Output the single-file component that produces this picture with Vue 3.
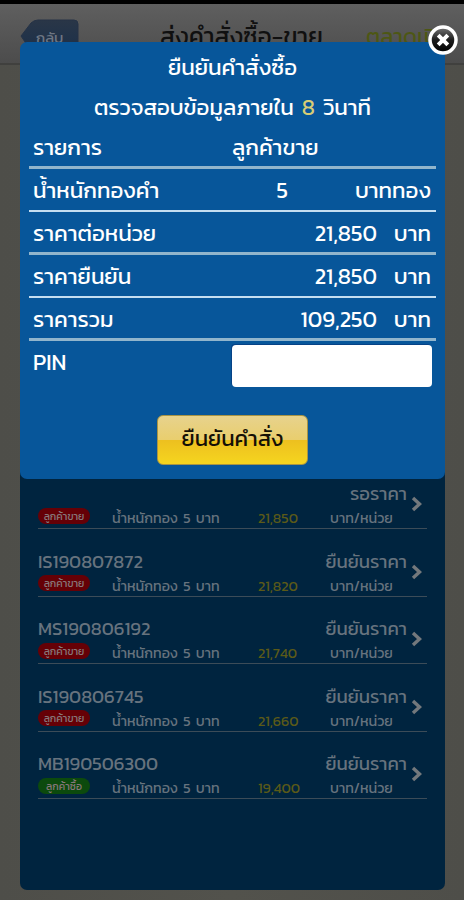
<template>
  <div class="screen">
    <header class="topbar">
      <div class="back-wrapper">
        <svg class="back-shape" width="60" height="44" viewBox="0 0 60 44">
          <defs>
            <linearGradient id="backFill" x1="0" y1="0" x2="0" y2="1">
              <stop offset="0" stop-color="#2a3647" />
              <stop offset="0.4" stop-color="#223349" />
              <stop offset="1" stop-color="#1c2c44" />
            </linearGradient>
          </defs>
          <path d="M1 17 L11 4 Q14 1 18 1 H54 Q58 1 58 5 V38 Q58 42 54 42 H18 Q14 42 11 32 Z" fill="url(#backFill)" stroke="#263347" />
        </svg>
        <span class="back-label">กลับ</span>
      </div>
      <h1 class="page-title">ส่งคำสั่งซื้อ-ขาย</h1>
      <span class="market">ตลาดเปิด</span>
    </header>

    <main class="orders">
      <div v-for="(order, index) in orders" :key="index" class="order">
        <div class="order-head">
          <span class="order-id">{{ order.id }}</span>
          <span class="order-status">{{ order.status }}</span>
        </div>
        <div class="order-info">
          <span class="badge" :class="{ buy: order.buy }">{{ order.buy ? 'ลูกค้าซื้อ' : 'ลูกค้าขาย' }}</span>
          <span class="weight">น้ำหนักทอง 5 บาท</span>
          <span class="price">{{ order.price }}</span>
          <span class="unit">บาท/หน่วย</span>
        </div>
        <svg class="chevron" width="12" height="18" viewBox="0 0 12 18">
          <path d="M2 3 L8.5 9 L2 15" fill="none" stroke="#73787c" stroke-width="3.4" />
        </svg>
      </div>
    </main>

    <section class="modal">
      <h2 class="modal-title">ยืนยันคำสั่งซื้อ</h2>
      <p class="countdown">ตรวจสอบข้อมูลภายใน <span class="seconds">{{ seconds }}</span> วินาที</p>

      <div class="table">
        <div v-for="(row, index) in rows" :key="row.label" class="row" :class="{ thick: index % 2 === 0 }">
          <span class="label">{{ row.label }}</span>
          <span class="value" :class="row.kind">{{ row.value }}</span>
          <span v-if="row.unit" class="row-unit">{{ row.unit }}</span>
        </div>
      </div>

      <div class="pin">
        <label for="pin" class="pin-label">PIN</label>
        <input id="pin" v-model="pin" class="pin-input" type="password">
      </div>

      <button class="confirm"><span class="confirm-text">ยืนยันคำสั่ง</span></button>

      <svg class="close" width="32" height="32" viewBox="0 0 32 32">
        <defs>
          <linearGradient id="closeFill" x1="0" y1="0" x2="0" y2="1">
            <stop offset="0" stop-color="#777" />
            <stop offset="0.5" stop-color="#1c1c1c" />
            <stop offset="1" stop-color="#000" />
          </linearGradient>
        </defs>
        <circle cx="16" cy="16" r="13" fill="url(#closeFill)" stroke="#fff" stroke-width="3.5" />
        <path d="M11.2 11.2 L20.8 20.8 M20.8 11.2 L11.2 20.8" stroke="#fff" stroke-width="4" />
      </svg>
    </section>
  </div>
</template>

<script setup>
import { ref } from 'vue';

const seconds = ref(8);
const pin = ref('');

const rows = [
  { label: 'รายการ', value: 'ลูกค้าขาย', kind: 'side' },
  { label: 'น้ำหนักทองคำ', value: '5', kind: 'amount', unit: 'บาททอง' },
  { label: 'ราคาต่อหน่วย', value: '21,850', kind: 'money', unit: 'บาท' },
  { label: 'ราคายืนยัน', value: '21,850', kind: 'money', unit: 'บาท' },
  { label: 'ราคารวม', value: '109,250', kind: 'money', unit: 'บาท' },
];

const orders = [
  { id: '', status: 'รอราคา', price: '21,850' },
  { id: 'IS190807872', status: 'ยืนยันราคา', price: '21,820' },
  { id: 'MS190806192', status: 'ยืนยันราคา', price: '21,740' },
  { id: 'IS190806745', status: 'ยืนยันราคา', price: '21,660' },
  { id: 'MB190506300', status: 'ยืนยันราคา', price: '19,400', buy: true },
];
</script>

<style>
body {
  margin: 0;
  background: #50504a;
}
</style>

<style scoped>
.screen {
  position: relative;
  box-sizing: border-box;
  width: 464px;
  height: 900px;
  overflow: hidden;
  display: flex;
  flex-direction: column;
  border-top: 4px solid #000;
  background: linear-gradient(90deg, #4e4e49, #52524c 50%, #4e4e49);
  font-family: 'Kanit', 'Prompt', 'Noto Sans Thai', 'Inter', sans-serif;
  white-space: nowrap;
}

.topbar {
  flex: none;
  height: 61px;
  box-sizing: border-box;
  display: flex;
  padding: 15px 0 0 20px;
  background: linear-gradient(#5f5f5f, #4c4c4c);
  border-bottom: 2px solid #40403e;
}

.back-wrapper {
  display: grid;
  width: 60px;
  height: 44px;
}

.back-shape,
.back-label {
  grid-area: 1 / 1;
}

.back-label {
  padding: 9px 0 0 16px;
  font-size: 15px;
  line-height: 20px;
  color: #6d7683;
}

.page-title {
  margin: 3px 0 0 80px;
  width: 206px;
  font-size: 24.5px;
  font-weight: 400;
  line-height: 30px;
  color: #101010;
}

.market {
  margin-top: 3px;
  font-size: 22px;
  line-height: 30px;
  color: #4d5714;
}

.orders {
  box-sizing: border-box;
  width: 425px;
  height: 809px;
  margin: 16px 0 0 20px;
  padding: 398px 18px 0;
  border-radius: 7px;
  background: #00243f;
}

.order {
  box-sizing: border-box;
  width: 389px;
  height: 67.5px;
  display: grid;
  grid-template: 1fr 22px / 1fr 20px;
  border-bottom: 1px solid #3c4c58;
  color: #67737e;
}

.order:first-child {
  height: 50px;
}

.order-head {
  display: flex;
  align-items: flex-end;
  justify-content: space-between;
  line-height: 24px;
}

.order-id,
.order-status {
  font-size: 18.5px;
}

.order-info {
  grid-row: 2;
  display: grid;
  grid-template-columns: 74px 146px 72px 1fr;
  align-items: center;
  padding-top: 1px;
  font-size: 14.3px;
  line-height: 22px;
  word-spacing: 2px;
}

.badge {
  width: 52px;
  height: 16px;
  margin-bottom: 5px;
  border-radius: 8px;
  background: #650006;
  color: #87777a;
  font-size: 10.5px;
  line-height: 16px;
  text-align: center;
}

.badge.buy {
  background: #0c4a0d;
}

.price {
  color: #5b5a18;
}

.chevron {
  grid-area: 1 / 2 / 3 / 3;
  align-self: end;
  margin: 0 0 15px 4px;
}

.modal {
  position: absolute;
  top: 38px;
  left: 20px;
  box-sizing: border-box;
  width: 425px;
  height: 437px;
  padding: 6px 9px 0;
  display: flex;
  flex-direction: column;
  border-radius: 7px;
  background: #07569a;
  color: #fff;
  font-size: 22.3px;
}

.modal-title,
.countdown {
  margin: 0;
  font-size: 22.3px;
  font-weight: 400;
  line-height: 39px;
  text-align: center;
}

.countdown {
  line-height: 40px;
  margin-bottom: -1px;
  word-spacing: 3px;
}

.seconds {
  color: #d8cd75;
}

.row {
  box-sizing: border-box;
  height: 43px;
  display: flex;
  padding: 0 5px 0 4px;
  line-height: 43px;
  border-bottom: 2px solid #c5def1;
}

.row.thick {
  border-bottom: 3px solid #91b5cc;
}

.label {
  width: 199px;
}

.side {
  width: 86px;
}

.amount {
  width: 60px;
  margin-left: -4px;
  text-align: right;
}

.money {
  width: 145px;
  text-align: right;
}

.row-unit {
  margin-left: auto;
}

.pin {
  display: flex;
  justify-content: space-between;
  padding: 4px 4px 0;
}

.pin-label {
  line-height: 35px;
}

.pin-input {
  box-sizing: border-box;
  width: 200px;
  height: 42px;
  border: 0;
  border-radius: 4px;
  background: #fff;
  box-shadow: -1px -1px 0 #064286;
}

.confirm {
  align-self: center;
  width: 151px;
  height: 50px;
  margin-top: 28px;
  padding: 0 0 4px;
  border: 1px solid #a89444;
  border-radius: 6px;
  background: linear-gradient(#e7d28d, #e9ce6e 49%, #edc01f 51%, #f5d51f);
  color: #151006;
  font-family: inherit;
  font-size: 22px;
}

.close {
  position: absolute;
  top: -18px;
  right: -14px;
}
</style>
